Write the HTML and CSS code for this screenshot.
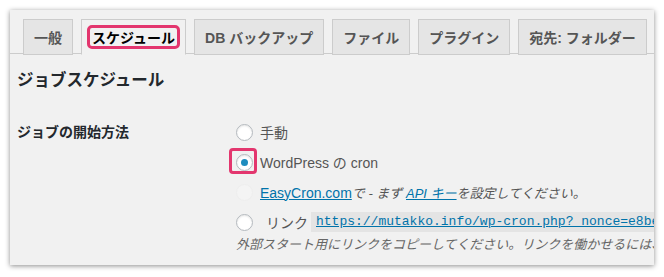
FILE: index.html
```html
<!DOCTYPE html>
<html lang="ja">
<head>
  <meta charset="UTF-8">
  <meta name="viewport" content="width=device-width, initial-scale=1.0">
  <title>ジョブスケジュール</title>
  <link rel="stylesheet" href="styles.css">
</head>
<body>
  <div class="panel">
    <div class="tabs">
      <div class="tab">一般</div>
      <div class="tab active"><span class="mark">スケジュール</span></div>
      <div class="tab">DB バックアップ</div>
      <div class="tab">ファイル</div>
      <div class="tab">プラグイン</div>
      <div class="tab">宛先: フォルダー</div>
    </div>

    <div class="content">
      <h2>ジョブスケジュール</h2>

      <div class="form-row">
        <div class="row-label">ジョブの開始方法</div>
        <div class="options">
          <label class="option">
            <span class="radio"></span>
            <span>手動</span>
          </label>
          <label class="option">
            <span class="radio-mark"><span class="radio checked"></span></span>
            <span>WordPress の cron</span>
          </label>
          <label class="option">
            <span class="radio disabled"></span>
            <span><a href="#">EasyCron.com</a><em>で - まず <a href="#">API キー</a>を設定してください。</em></span>
          </label>
          <label class="option">
            <span class="radio"></span>
            <span class="link-label">リンク</span>
            <code class="link-box"><a href="#">https://mutakko.info/wp-cron.php?_nonce=e8be27a1c4</a></code>
          </label>
          <p class="description">外部スタート用にリンクをコピーしてください。リンクを働かせるには、ジョブを有効にする必要があります。</p>
        </div>
      </div>
    </div>
  </div>
</body>
</html>
```

FILE: styles.css
```css
body {
  margin: 0;
  background: #fff;
  font-family: "Liberation Sans", "Noto Sans CJK JP", sans-serif;
  color: #444;
}

.panel {
  margin: 10px 10px 11px 10px;
  height: 255px;
  background: #f1f1f1;
  box-shadow: 0 1px 5px rgba(0, 0, 0, 0.45);
  overflow: hidden;
}

.tabs {
  display: flex;
  gap: 8px;
  padding: 9px 0 0 13px;
  height: 44px;
  box-sizing: border-box;
  border-bottom: 1px solid #ccc;
}

.tab {
  box-sizing: border-box;
  height: 36px;
  margin-bottom: -1px;
  padding: 0 10px;
  display: flex;
  align-items: center;
  border: 1px solid #ccc;
  background: #e5e5e5;
  color: #555;
  font-size: 14px;
  font-weight: bold;
}

.tab.active {
  background: #f1f1f1;
  border-bottom-color: #f1f1f1;
  color: #000;
  padding: 0 5px;
}

.mark {
  display: flex;
  align-items: center;
  height: 24px;
  box-sizing: border-box;
  padding: 0 2px;
  border: 3px solid #e3366e;
  border-radius: 5px;
}

.content {
  padding: 0 7px;
}

h2 {
  margin: 14px 0 0;
  font-size: 16.5px;
  line-height: 24px;
  color: #23282d;
}

.form-row {
  display: grid;
  grid-template-columns: 219px 1fr;
  margin-top: 25px;
}

.row-label {
  font-size: 14px;
  font-weight: bold;
  line-height: 30px;
  color: #23282d;
}

.options {
  white-space: nowrap;
}

.option {
  display: flex;
  align-items: center;
  height: 30px;
  font-size: 14px;
  color: #555;
}

.radio {
  box-sizing: border-box;
  width: 17px;
  height: 17px;
  margin-right: 7px;
  border: 1px solid #b4b9be;
  border-radius: 50%;
  background: #fff;
  box-shadow: inset 0 1px 2px rgba(0, 0, 0, 0.1);
  flex: none;
  display: flex;
  align-items: center;
  justify-content: center;
}

.radio.checked::before {
  content: "";
  width: 7px;
  height: 7px;
  border-radius: 50%;
  background: #1e8cbe;
}

.radio.disabled {
  border-color: #eee;
  background: #f4f4f4;
  box-shadow: none;
}

.radio-mark {
  position: relative;
  display: flex;
}

.radio-mark::after {
  content: "";
  position: absolute;
  left: -7px;
  top: -6px;
  width: 28px;
  height: 26px;
  box-sizing: border-box;
  border: 3px solid #e3366e;
  border-radius: 4px;
}

a {
  color: #0073aa;
}

em {
  color: #555;
  font-size: 13px;
}

.link-label {
  margin-left: 6px;
  margin-right: 3px;
}

.link-box {
  display: block;
  height: 20px;
  line-height: 20px;
  padding: 0 5px;
  background: #e4e4e4;
  font-family: "Liberation Mono", monospace;
  font-size: 13px;
}

.description {
  margin: 0;
  font-size: 13px;
  line-height: 16px;
  font-style: italic;
  color: #666;
}
```
